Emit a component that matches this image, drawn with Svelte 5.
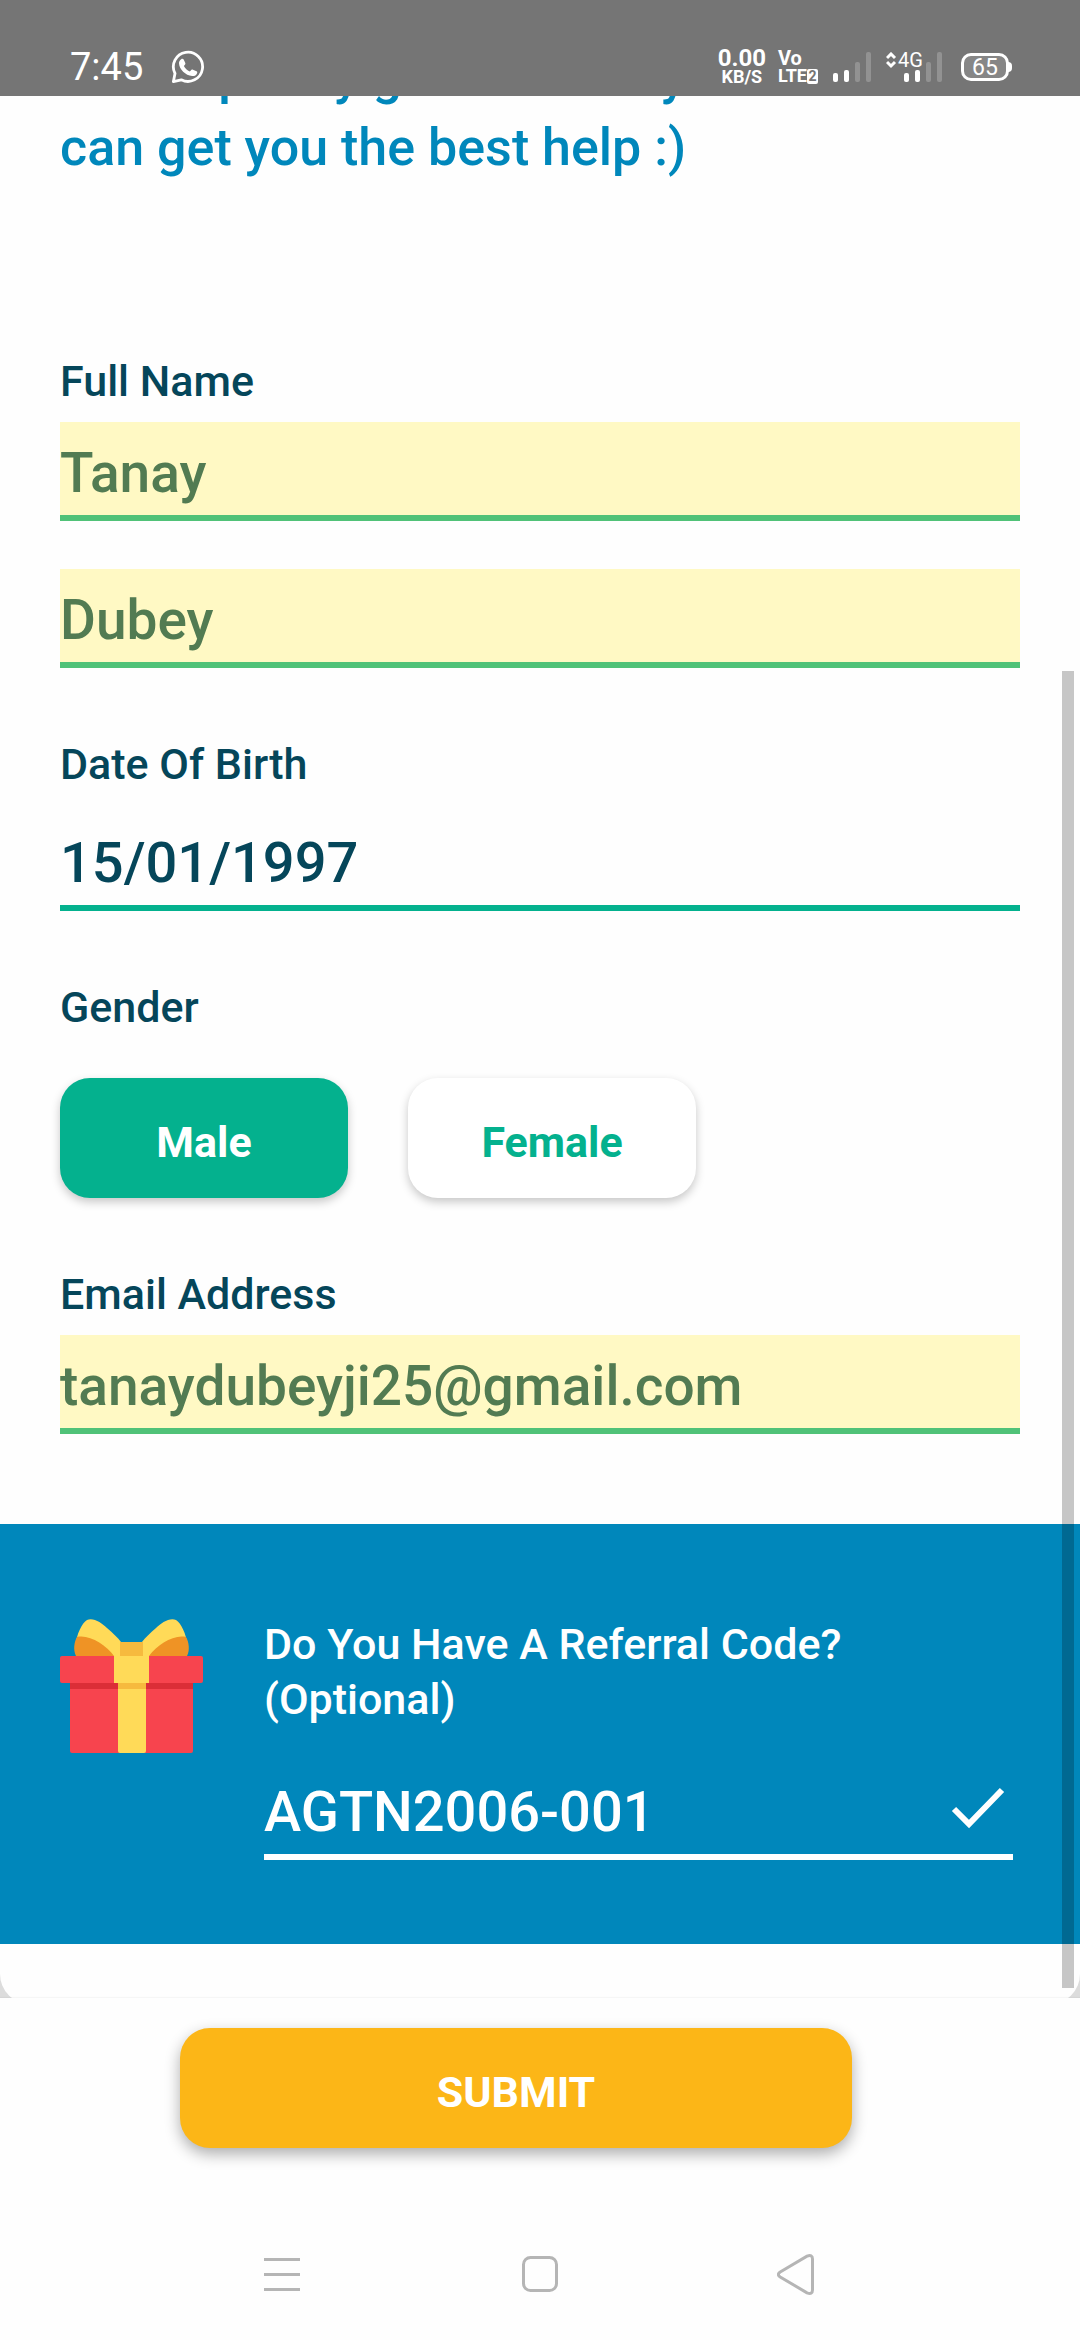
<script>
  let firstName = $state('Tanay');
  let lastName = $state('Dubey');
  let birthDate = $state('15/01/1997');
  let gender = $state('Male');
  let email = $state('tanaydubeyji25@gmail.com');
  let referral = $state('AGTN2006-001');
</script>

<div class="screen">
  <header class="status">
    <div class="status-group left">
      <time>7:45</time>
      <svg class="whatsapp" viewBox="0 0 34 34" width="34" height="34" role="img" aria-label="WhatsApp">
        <path d="M2.4 31.6 4 23.500A14.600 14.600 0 1 1 10.300 29.800Z" fill="none" stroke="#fff" stroke-width="2.800" stroke-linejoin="round" />
        <path d="M10.200 9.200c.9-.7 2.100-.5 2.600.5l1.500 3.200c.3.700.1 1.300-.4 1.900l-1 1.200c1.300 2.400 3.200 4.200 5.900 5.400l1.500-1.400c.5-.5 1.100-.6 1.700-.3l3.500 1.500c.8.400.9 1.200.6 2-.7 2.200-2.900 3-5 2.800-6.600-.6-12.900-6.800-13.100-12.800 0-1.700.9-3.100 2.200-4Z" fill="#fff" />
      </svg>
    </div>
    <div class="status-group right">
      <div class="speed"><span class="rate">0.00</span><span class="unit">KB/S</span></div>
      <div class="volte">
        <span class="vo">Vo</span>
        <span class="lte">LTE<span class="sim">2</span></span>
      </div>
      <svg class="bars" viewBox="0 0 38 30" width="38" height="30" role="img" aria-label="Signal, SIM 1">
        <rect x="0" y="21" width="5" height="9" rx="2" />
        <rect x="11" y="18" width="5" height="12" rx="2" />
        <rect class="dim" x="22" y="10" width="5" height="20" rx="2" />
        <rect class="dim" x="33" y="0" width="5" height="30" rx="2" />
      </svg>
      <div class="mobile">
        <svg class="bars" viewBox="0 0 56 30" width="56" height="30" role="img" aria-label="Signal, SIM 2">
          <path d="m1 6 4-4 4 4M1 10l4 4 4-4" fill="none" stroke="#fff" stroke-width="3" />
          <rect x="18" y="21" width="5" height="9" rx="2" />
          <rect x="29" y="18" width="5" height="12" rx="2" />
          <rect class="dim" x="40" y="10" width="5" height="20" rx="2" />
          <rect class="dim" x="51" y="0" width="5" height="30" rx="2" />
        </svg>
        <span class="network">4G</span>
      </div>
      <div class="battery">65</div>
    </div>
  </header>

  <main class="viewport">
    <form class="card" id="details" onsubmit={(e) => e.preventDefault()}>
      <div class="fields">
        <h1><span>Must specify gender safely so we</span><span>can get you the best help :)</span></h1>

        <section class="field">
          <label for="first">Full Name</label>
          <input id="first" class="filled" type="text" bind:value={firstName} />
          <input class="filled second" type="text" aria-label="Last name" bind:value={lastName} />
        </section>

        <section class="field roomy">
          <label for="dob">Date Of Birth</label>
          <input id="dob" type="text" bind:value={birthDate} />
        </section>

        <section class="field">
          <span class="label" id="gender-label">Gender</span>
          <div class="choices" role="group" aria-labelledby="gender-label">
            {#each ['Male', 'Female'] as option}
              <button
                type="button"
                class="choice"
                class:selected={gender === option}
                aria-pressed={gender === option}
                onclick={() => (gender = option)}>{option}</button>
            {/each}
          </div>
        </section>

        <section class="field">
          <label for="email">Email Address</label>
          <input id="email" class="filled" type="email" bind:value={email} />
        </section>
      </div>

      <section class="referral">
        <svg class="gift" viewBox="0 0 143 134" width="143" height="134" aria-hidden="true">
          <path d="M15 28C17 14 22 4 27 1c6-3 15 3 20 8 6 5 11 10 14 14v14H17Z" fill="#ffda58" />
          <path d="M128 28C126 14 121 4 116 1c-6-3-15 3-20 8-6 5-11 10-14 14v14h44Z" fill="#ffda58" />
          <path d="M16 37c-3-6-2-14 1-19 12-3 29 8 37 19Z" fill="#ef9325" />
          <path d="M127 37c3-6 2-14-1-19-12-3-29 8-37 19Z" fill="#ef9325" />
          <rect x="60" y="23" width="23" height="15" fill="#f6ba3e" />
          <rect x="10" y="60" width="123" height="74" rx="2" fill="#f7444e" />
          <rect x="10" y="63" width="123" height="7" fill="#db2e37" />
          <rect x="58" y="63" width="28" height="71" rx="2" fill="#ffda58" />
          <rect x="58" y="63" width="28" height="7" fill="#f6ba3e" />
          <rect y="37" width="143" height="27" rx="2" fill="#f7444e" />
          <rect x="54" y="37" width="35" height="27" fill="#ffda58" />
        </svg>
        <div class="code">
          <label for="code">Do You Have A Referral Code? (Optional)</label>
          <div class="code-line">
            <input id="code" type="text" bind:value={referral} />
            <svg viewBox="0 0 54 42" width="54" height="42" role="img" aria-label="Code accepted">
              <path d="m3 22 15 15L51 3" fill="none" stroke="#fff" stroke-width="6" />
            </svg>
          </div>
        </div>
      </section>
    </form>
    <div class="scrollbar" aria-hidden="true"></div>
  </main>

  <footer class="actions">
    <button class="submit" type="submit" form="details">SUBMIT</button>
  </footer>

  <nav class="system" aria-label="System navigation">
    <button type="button" aria-label="Recent apps">
      <svg viewBox="0 0 42 42" width="42" height="42"><path d="M3 6.500h36M3 21.500h36M3 36.500h36" /></svg>
    </button>
    <button type="button" aria-label="Home">
      <svg viewBox="0 0 42 42" width="42" height="42"><rect x="4.500" y="4.500" width="33" height="33" rx="7" /></svg>
    </button>
    <button type="button" aria-label="Back">
      <svg viewBox="0 0 42 42" width="42" height="42"><path d="M3.200 19 30 3.200Q35.500 1 35.500 6V37Q35.500 42 30 39.800L3.200 24Q-.5 21.500 3.200 19Z" /></svg>
    </button>
  </nav>
</div>

<style>
  :global(body) {
    margin: 0;
    background: #fff;
  }
  .screen {
    display: flex;
    flex-direction: column;
    min-height: 100vh;
    font-family: Roboto, 'Noto Sans', sans-serif;
    font-weight: 500;
    color: #05465a;
    background: #fefefe;
  }
  button,
  input {
    font: inherit;
    margin: 0;
    border: 0;
    border-radius: 0;
    outline: 0;
  }
  button {
    cursor: pointer;
  }
  svg {
    display: block;
    flex: none;
  }

  .status {
    position: relative;
    z-index: 1;
    display: flex;
    justify-content: space-between;
    align-items: flex-end;
    box-sizing: border-box;
    height: 96px;
    padding: 0 68px 9px 70px;
    color: #fff;
    background: #757575;
    font-weight: 400;
  }
  .status-group {
    display: flex;
    align-items: center;
    height: 40px;
  }
  .left {
    gap: 28px;
    font-size: 38px;
    line-height: 46px;
  }
  .speed,
  .volte {
    display: flex;
    flex-direction: column;
    font-weight: 700;
  }
  .speed {
    align-items: center;
    margin-right: 12px;
  }
  .rate {
    font-size: 24px;
    line-height: 20px;
  }
  .unit {
    font-size: 18px;
    line-height: 18px;
  }
  .volte {
    margin-right: 15px;
  }
  .vo {
    font-size: 20px;
    line-height: 18px;
  }
  .lte {
    display: flex;
    align-items: center;
    font-size: 18px;
    line-height: 18px;
  }
  .sim {
    width: 11px;
    border-radius: 2px;
    font-size: 14px;
    line-height: 15px;
    text-align: center;
    color: #757575;
    background: #fff;
  }
  .bars {
    fill: #fff;
    margin-right: 15px;
  }
  .mobile {
    position: relative;
    margin-right: 4px;
  }
  .network {
    position: absolute;
    top: -1px;
    left: 12px;
    font-size: 20px;
    line-height: 18px;
  }
  .dim {
    fill: #929292;
  }
  .battery {
    position: relative;
    box-sizing: border-box;
    width: 48px;
    height: 28px;
    margin-right: 3px;
    border: 3px solid #fff;
    border-radius: 10px;
    background: #868686;
    font-size: 23px;
    line-height: 23px;
    text-align: center;
  }
  .battery::after {
    content: '';
    position: absolute;
    top: 6px;
    right: -6px;
    width: 4px;
    height: 10px;
    border-radius: 0 4px 4px 0;
    background: #fff;
  }

  .viewport {
    position: relative;
    overflow: hidden;
    background: #dcdcdc;
  }
  .card {
    margin: -56px 0 -6px;
    padding-bottom: 60px;
    border-radius: 30px;
    background: #fefefe;
  }
  .fields {
    display: flex;
    flex-direction: column;
    gap: 69px;
    padding: 0 60px 90px;
  }
  h1 {
    margin: 0 0 101px;
    font-size: 52px;
    line-height: 72px;
    font-weight: 500;
    color: #0087bb;
  }
  h1 span {
    display: block;
  }
  .field {
    display: flex;
    flex-direction: column;
    gap: 13px;
  }
  .roomy {
    gap: 20px;
  }
  label,
  .label {
    font-size: 43px;
    line-height: 55px;
  }
  input {
    box-sizing: border-box;
    width: 100%;
    height: 99px;
    padding: 8px 0 0;
    border-bottom: 6px solid #04b18e;
    font-size: 56px;
    color: #05465a;
    background: transparent;
  }
  .filled {
    font-size: 55px;
    color: #527b52;
    background: #fff9c4;
    border-bottom-color: #50c278;
  }
  .second {
    margin-top: 35px;
  }
  .choices {
    display: flex;
    gap: 60px;
    margin-top: 30px;
  }
  .choice,
  .submit {
    height: 120px;
    padding: 8px 0 0;
    border-radius: 30px;
    font-size: 43px;
    font-weight: 700;
  }
  .choice {
    width: 288px;
    color: #04b18e;
    background: #fff;
    box-shadow: 0 4px 10px rgba(0, 0, 0, 0.22);
  }
  .choice.selected {
    color: #fff;
    background: #04b18e;
  }

  .referral {
    display: flex;
    align-items: flex-start;
    gap: 61px;
    padding: 93px 67px 84px 60px;
    color: #fff;
    background: #0087bb;
  }
  .gift {
    margin-top: 2px;
  }
  .code {
    display: flex;
    flex-direction: column;
    flex: 1;
    gap: 34px;
  }
  .code label {
    max-width: 660px;
  }
  .code-line {
    display: flex;
    align-items: center;
    box-sizing: border-box;
    height: 99px;
    padding-right: 8px;
    border-bottom: 6px solid #fff;
  }
  .code-line input {
    flex: 1;
    min-width: 0;
    height: 93px;
    border: 0;
    color: #fff;
  }

  .scrollbar {
    position: absolute;
    top: 575px;
    right: 6px;
    bottom: 10px;
    width: 12px;
    background: rgba(0, 0, 0, 0.22);
  }

  .actions {
    position: relative;
    padding: 30px 228px 60px 180px;
    background: #fefefe;
    box-shadow: 0 -1px 1px rgba(0, 0, 0, 0.03);
  }
  .submit {
    display: block;
    width: 100%;
    color: #fff;
    background: #fcb617;
    box-shadow: 0 6px 15px rgba(0, 0, 0, 0.32);
  }

  .system {
    display: flex;
    justify-content: center;
    align-items: center;
    gap: 216px;
    height: 132px;
    margin-top: auto;
  }
  .system button {
    padding: 0;
    background: none;
  }
  .system svg {
    fill: none;
    stroke: #b5b5b5;
    stroke-width: 3;
  }
</style>
